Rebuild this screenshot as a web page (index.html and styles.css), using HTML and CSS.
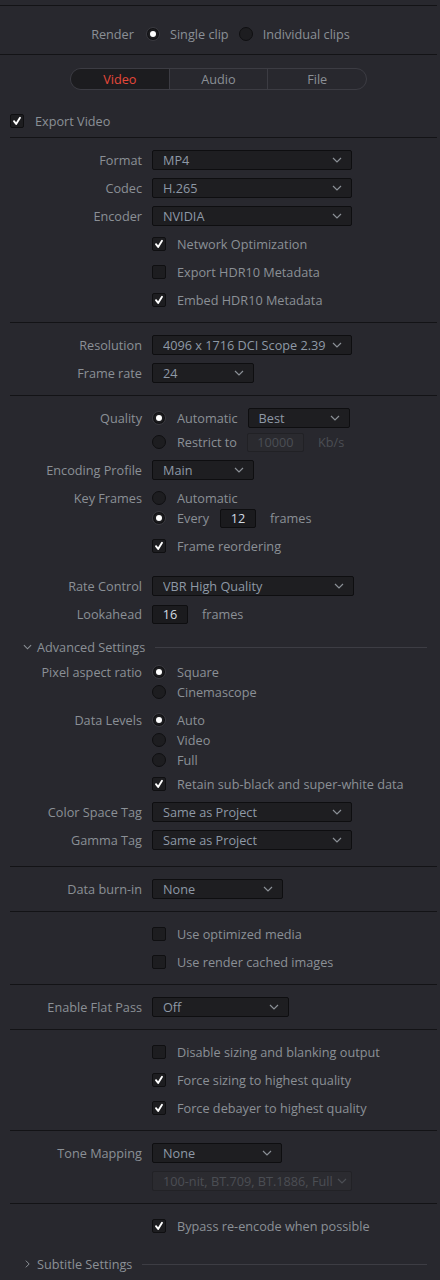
FILE: index.html
```html
<!DOCTYPE html>
<html>
<head>
<meta charset="utf-8">
<link rel="stylesheet" href="styles.css">
</head>
<body>
<div class="panel">
  <div class="topgap"></div>
  <div class="divider full"></div>

  <div class="render-section">
    <div class="render-row">
      <span class="txt">Render</span>
      <span class="radio on"></span>
      <span class="txt">Single clip</span>
      <span class="radio"></span>
      <span class="txt">Individual clips</span>
    </div>
  </div>
  <div class="divider full"></div>

  <div class="tabs-section">
    <div class="tabs">
      <div class="tab active">Video</div>
      <div class="tab">Audio</div>
      <div class="tab">File</div>
    </div>
    <div class="export-row">
      <span class="check on"><svg viewBox="0 0 14 14"><path d="M3.5 7.2 L6 10.5 L10.5 3.2"/></svg></span>
      <span class="txt">Export Video</span>
    </div>
  </div>
  <div class="divider"></div>

  <div class="section">
    <div class="row"><div class="label">Format</div><div class="select w200"><span>MP4</span><svg class="chev" viewBox="0 0 10 6"><path d="M1 1 L5 5 L9 1"/></svg></div></div>
    <div class="row"><div class="label">Codec</div><div class="select w200"><span>H.265</span><svg class="chev" viewBox="0 0 10 6"><path d="M1 1 L5 5 L9 1"/></svg></div></div>
    <div class="row"><div class="label">Encoder</div><div class="select w200"><span>NVIDIA</span><svg class="chev" viewBox="0 0 10 6"><path d="M1 1 L5 5 L9 1"/></svg></div></div>
    <div class="row"><div class="label"></div><span class="check on"><svg viewBox="0 0 14 14"><path d="M3.5 7.2 L6 10.5 L10.5 3.2"/></svg></span><span class="txt opt">Network Optimization</span></div>
    <div class="row"><div class="label"></div><span class="check"></span><span class="txt opt">Export HDR10 Metadata</span></div>
    <div class="row"><div class="label"></div><span class="check on"><svg viewBox="0 0 14 14"><path d="M3.5 7.2 L6 10.5 L10.5 3.2"/></svg></span><span class="txt opt">Embed HDR10 Metadata</span></div>
  </div>
  <div class="divider"></div>

  <div class="section">
    <div class="row"><div class="label">Resolution</div><div class="select w200"><span>4096 x 1716 DCI Scope 2.39</span><svg class="chev" viewBox="0 0 10 6"><path d="M1 1 L5 5 L9 1"/></svg></div></div>
    <div class="row"><div class="label">Frame rate</div><div class="select w102"><span>24</span><svg class="chev" viewBox="0 0 10 6"><path d="M1 1 L5 5 L9 1"/></svg></div></div>
  </div>
  <div class="divider"></div>

  <div class="section long">
    <div class="row r24"><div class="label">Quality</div><span class="radio on"></span><span class="txt opt">Automatic</span><div class="select w102 after"><span>Best</span><svg class="chev" viewBox="0 0 10 6"><path d="M1 1 L5 5 L9 1"/></svg></div></div>
    <div class="row r24"><div class="label"></div><span class="radio"></span><span class="txt opt">Restrict to</span><div class="field disabled w57 after-input">10000</div><span class="txt dim unit">Kb/s</span></div>
    <div class="row gap2"><div class="label">Encoding Profile</div><div class="select w102"><span>Main</span><svg class="chev" viewBox="0 0 10 6"><path d="M1 1 L5 5 L9 1"/></svg></div></div>
    <div class="row r20 gap4"><div class="label">Key Frames</div><span class="radio"></span><span class="txt opt">Automatic</span></div>
    <div class="row r20"><div class="label"></div><span class="radio on"></span><span class="txt opt">Every</span><div class="field w36 every">12</div><span class="txt unit">frames</span></div>
    <div class="row gap4"><div class="label"></div><span class="check on"><svg viewBox="0 0 14 14"><path d="M3.5 7.2 L6 10.5 L10.5 3.2"/></svg></span><span class="txt opt">Frame reordering</span></div>
    <div class="row gap12"><div class="label">Rate Control</div><div class="select w202"><span>VBR High Quality</span><svg class="chev" viewBox="0 0 10 6"><path d="M1 1 L5 5 L9 1"/></svg></div></div>
    <div class="row"><div class="label">Lookahead</div><div class="field w36">16</div><span class="txt unit">frames</span></div>

    <div class="group-head adv">
      <svg class="hchev" viewBox="0 0 10 6"><path d="M1 1 L5 5 L9 1"/></svg>
      <span class="txt">Advanced Settings</span>
      <span class="hline"></span>
    </div>

    <div class="row r20 gap5"><div class="label">Pixel aspect ratio</div><span class="radio on"></span><span class="txt opt">Square</span></div>
    <div class="row r20"><div class="label"></div><span class="radio"></span><span class="txt opt">Cinemascope</span></div>
    <div class="row r20 gap8"><div class="label">Data Levels</div><span class="radio on"></span><span class="txt opt">Auto</span></div>
    <div class="row r20"><div class="label"></div><span class="radio"></span><span class="txt opt">Video</span></div>
    <div class="row r20"><div class="label"></div><span class="radio"></span><span class="txt opt">Full</span></div>
    <div class="row"><div class="label"></div><span class="check on"><svg viewBox="0 0 14 14"><path d="M3.5 7.2 L6 10.5 L10.5 3.2"/></svg></span><span class="txt opt">Retain sub-black and super-white data</span></div>
    <div class="row"><div class="label">Color Space Tag</div><div class="select w200"><span>Same as Project</span><svg class="chev" viewBox="0 0 10 6"><path d="M1 1 L5 5 L9 1"/></svg></div></div>
    <div class="row"><div class="label">Gamma Tag</div><div class="select w200"><span>Same as Project</span><svg class="chev" viewBox="0 0 10 6"><path d="M1 1 L5 5 L9 1"/></svg></div></div>
  </div>
  <div class="divider"></div>

  <div class="section">
    <div class="row"><div class="label">Data burn-in</div><div class="select w131"><span>None</span><svg class="chev" viewBox="0 0 10 6"><path d="M1 1 L5 5 L9 1"/></svg></div></div>
  </div>
  <div class="divider"></div>

  <div class="section">
    <div class="row"><div class="label"></div><span class="check"></span><span class="txt opt">Use optimized media</span></div>
    <div class="row"><div class="label"></div><span class="check"></span><span class="txt opt">Use render cached images</span></div>
  </div>
  <div class="divider"></div>

  <div class="section">
    <div class="row"><div class="label">Enable Flat Pass</div><div class="select w137"><span>Off</span><svg class="chev" viewBox="0 0 10 6"><path d="M1 1 L5 5 L9 1"/></svg></div></div>
  </div>
  <div class="divider"></div>

  <div class="section">
    <div class="row"><div class="label"></div><span class="check"></span><span class="txt opt">Disable sizing and blanking output</span></div>
    <div class="row"><div class="label"></div><span class="check on"><svg viewBox="0 0 14 14"><path d="M3.5 7.2 L6 10.5 L10.5 3.2"/></svg></span><span class="txt opt">Force sizing to highest quality</span></div>
    <div class="row"><div class="label"></div><span class="check on"><svg viewBox="0 0 14 14"><path d="M3.5 7.2 L6 10.5 L10.5 3.2"/></svg></span><span class="txt opt">Force debayer to highest quality</span></div>
  </div>
  <div class="divider"></div>

  <div class="section">
    <div class="row"><div class="label">Tone Mapping</div><div class="select w130"><span>None</span><svg class="chev" viewBox="0 0 10 6"><path d="M1 1 L5 5 L9 1"/></svg></div></div>
    <div class="row"><div class="label"></div><div class="select w200 disabled"><span>100-nit, BT.709, BT.1886, Full</span><svg class="chev" viewBox="0 0 10 6"><path d="M1 1 L5 5 L9 1"/></svg></div></div>
  </div>
  <div class="divider"></div>

  <div class="section last">
    <div class="row"><div class="label"></div><span class="check on"><svg viewBox="0 0 14 14"><path d="M3.5 7.2 L6 10.5 L10.5 3.2"/></svg></span><span class="txt opt">Bypass re-encode when possible</span></div>
    <div class="group-head sub">
      <svg class="hchev right" viewBox="0 0 6 10"><path d="M1 1 L5 5 L1 9"/></svg>
      <span class="txt">Subtitle Settings</span>
      <span class="hline"></span>
    </div>
  </div>
</div>
</body>
</html>
```

FILE: styles.css
```css
html, body {
  margin: 0;
  padding: 0;
  background: #28282e;
}

body {
  font-family: "Open Sans", "Noto Sans", sans-serif;
  font-size: 12.7px;
  color: #8b9096;
  width: 440px;
  min-height: 1280px;
}

.panel {
  width: 440px;
  padding-right: 3px;
  box-sizing: border-box;
}

.topgap {
  height: 5px;
}

.divider {
  height: 1px;
  background: #131316;
  margin-left: 10px;
}

.divider.full {
  margin-left: 0;
}

.txt {
  white-space: nowrap;
  line-height: 20px;
}

/* Render row */
.render-section {
  padding: 18px 0 10px;
}

.render-row {
  height: 20px;
  display: flex;
  align-items: center;
  justify-content: center;
  padding-left: 4px;
}

.render-row .radio {
  margin-left: 12px;
  margin-right: 10px;
}

.render-row .radio + .txt + .radio {
  margin-left: 10px;
}

/* Tabs */
.tabs-section {
  padding-top: 13px;
  padding-bottom: 2px;
}

.tabs {
  display: flex;
  width: 297px;
  height: 22px;
  margin: 0 auto;
  border: 1px solid #3c3c43;
  border-radius: 11px;
  overflow: hidden;
  box-sizing: border-box;
}

.tab {
  flex: 1;
  text-align: center;
  line-height: 20px;
  color: #8b9096;
}

.tab + .tab {
  border-left: 1px solid #3c3c43;
}

.tab.active {
  background: #1c1c1f;
  color: #e5483a;
}

.export-row {
  margin-top: 17px;
  height: 28px;
  display: flex;
  align-items: center;
  padding-left: 10px;
}

.export-row .txt {
  margin-left: 11px;
}

/* Sections and rows */
.section {
  padding: 8px 0;
}

.section.long {
  padding-top: 10px;
  padding-bottom: 12px;
}

.section.last {
  padding-bottom: 6px;
}

.row {
  display: flex;
  align-items: center;
  height: 28px;
}

.row.r24 { height: 24px; }
.row.r20 { height: 20px; }
.row.gap2 { margin-top: 2px; }
.row.gap4 { margin-top: 4px; }
.row.gap5 { margin-top: 5px; }
.row.gap8 { margin-top: 8px; }
.row.gap12 { margin-top: 12px; }

.label {
  width: 152px;
  flex: none;
  padding-right: 10px;
  box-sizing: border-box;
  text-align: right;
  white-space: nowrap;
  line-height: 20px;
}

.txt.opt {
  margin-left: 11px;
}

.txt.unit {
  margin-left: 14px;
}

.txt.dim {
  color: #4b4e54;
}

/* Checkbox */
.check {
  width: 14px;
  height: 14px;
  flex: none;
  box-sizing: border-box;
  border: 1px solid #0f0f11;
  background: #1d1d20;
  border-radius: 2px;
  display: flex;
  align-items: center;
  justify-content: center;
}

.check svg {
  width: 14px;
  height: 14px;
  fill: none;
  stroke: #ffffff;
  stroke-width: 2.2;
  stroke-linecap: round;
  stroke-linejoin: round;
}

/* Radio */
.radio {
  width: 14px;
  height: 14px;
  flex: none;
  box-sizing: border-box;
  border-radius: 50%;
  border: 1px solid #0f0f11;
  background: #1d1d20;
  display: flex;
  align-items: center;
  justify-content: center;
}

.radio.on {
  border-color: #3a3a40;
  box-shadow: 0 0 0 1px #101012 inset;
}

.radio.on::after {
  content: "";
  width: 6px;
  height: 6px;
  border-radius: 50%;
  background: #ffffff;
}

/* Select */
.select {
  height: 20px;
  box-sizing: border-box;
  border: 1px solid #0e0e10;
  background: #1e1e21;
  border-radius: 2px;
  display: flex;
  align-items: center;
  padding-left: 10px;
  padding-right: 9px;
  color: #8e99a6;
  flex: none;
}

.select span {
  flex: 1;
  white-space: nowrap;
  overflow: hidden;
  line-height: 18px;
}

.select .chev {
  width: 10px;
  height: 6px;
  flex: none;
  fill: none;
  stroke: #8b9096;
  stroke-width: 1.2;
}

.select.disabled {
  background: #2b2b30;
  border-color: #222226;
  color: #4b4e54;
  padding-right: 4px;
}

.select.disabled .chev {
  stroke: #4b4e54;
}

.select.after {
  margin-left: 10px;
}

.w200 { width: 200px; }
.w202 { width: 202px; }
.w102 { width: 102px; }
.w131 { width: 131px; }
.w137 { width: 137px; }
.w130 { width: 130px; }

/* Fields */
.field {
  height: 19px;
  box-sizing: border-box;
  border: 1px solid #0e0e10;
  background: #1b1b1e;
  border-radius: 2px;
  text-align: center;
  line-height: 17px;
  color: #d3dbe3;
  flex: none;
}

.field.w36 { width: 36px; }
.field.w57 { width: 57px; }

.field.every {
  margin-left: 11px;
}

.field.disabled {
  background: #2a2a2f;
  border-color: #212125;
  color: #4b4e54;
}

.field.after-input {
  margin-left: 10px;
}

/* Group headers */
.group-head {
  display: flex;
  align-items: center;
  height: 20px;
  padding-left: 23px;
  padding-right: 10px;
}

.group-head.adv {
  margin-top: 9px;
}

.group-head.sub {
  margin-top: 14px;
  padding-left: 25px;
}

.hchev {
  width: 9px;
  height: 6px;
  fill: none;
  stroke: #8b9096;
  stroke-width: 1.2;
  flex: none;
  margin-right: 5px;
}

.hchev.right {
  width: 5px;
  height: 10px;
  margin-right: 7px;
}

.hline {
  flex: 1;
  height: 1px;
  background: #3d3d44;
  margin-left: 10px;
}
```
